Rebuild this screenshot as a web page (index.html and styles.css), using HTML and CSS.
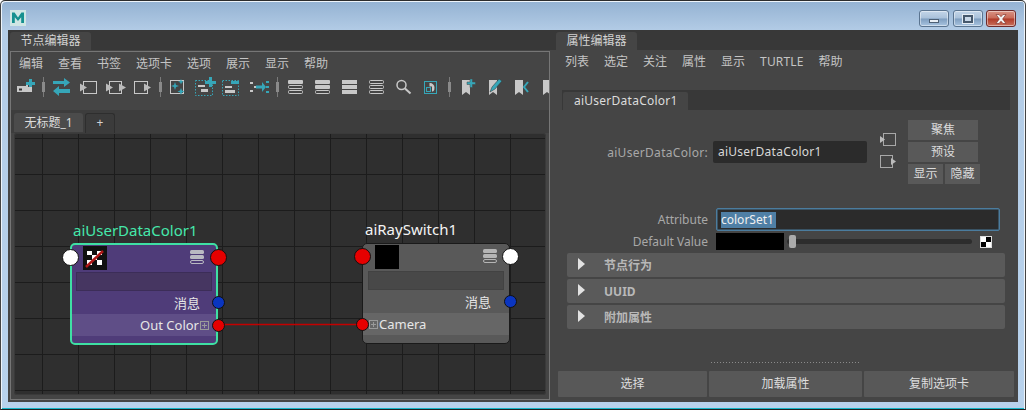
FILE: index.html
```html
<!DOCTYPE html>
<html lang="zh">
<head>
<meta charset="utf-8">
<title>节点编辑器</title>
<link rel="stylesheet" href="styles.css">
</head>
<body>
<div class="window">
  <header class="titlebar">
    <svg class="logo" width="16" height="16" viewBox="0 0 16 16"><rect width="16" height="16" fill="#cfe6e4"/><path d="M2 13V2.500h2.600L8 7.400 11.400 2.500H14V13h-2.800V7.300L8 11 4.800 7.300V13z" fill="#15908f"/></svg>
    <div class="winbtns">
      <div class="winbtn"><span class="glyph-min"></span></div>
      <div class="winbtn"><span class="glyph-max"></span></div>
      <div class="winbtn close"><svg width="14" height="10" viewBox="0 0 14 10"><path d="M2 0.500h3l2 2.200 2-2.200h3L8.600 5 12 9.500H9L7 7.200 5 9.500H2L5.400 5z" fill="#f2f2f2" stroke="#7a2a22" stroke-width=".6"/></svg></div>
    </div>
  </header>
  <div class="client">
    <section class="left-pane">
      <div class="pane-head"><div class="pane-tab">节点编辑器</div></div>
      <div class="frame">
        <nav class="menu"><span>编辑</span><span>查看</span><span>书签</span><span>选项卡</span><span>选项</span><span>展示</span><span>显示</span><span>帮助</span></nav>
        <div class="toolbar">
          <svg class="tool" viewBox="0 0 27 24"><path d="M6 11h9v-1h2v2h4v5H6z" fill="#c8c8c8"/><rect x="8" y="13.500" width="3" height="2" fill="#333"/><path d="M15 7h3V4h3v3h3v3h-3v2h-3v-2h-3z" fill="#36a6b8"/></svg>
          <i class="sep"></i>
          <svg class="tool" viewBox="0 0 27 24"><path d="M5 6h11V3l6 4.500-6 4.500V9H5zM22 14H11v-3l-6 5 6 5v-3h11z" fill="#36a6b8"/></svg>
          <svg class="tool" viewBox="0 0 27 24"><rect x="8.500" y="6.500" width="13" height="12" fill="none" stroke="#c8c8c8"/><path d="M5 8.500l7 4-7 4z" fill="#bbb"/></svg>
          <svg class="tool" viewBox="0 0 27 24"><rect x="7.500" y="6.500" width="12" height="12" fill="none" stroke="#c8c8c8"/><path d="M4 8.500l7 4-7 4zM17 8.500l7 4-7 4z" fill="#bbb"/></svg>
          <svg class="tool" viewBox="0 0 27 24"><rect x="5.500" y="6.500" width="13" height="12" fill="none" stroke="#c8c8c8"/><path d="M15 8.500l7 4-7 4z" fill="#bbb"/></svg>
          <i class="sep narrow"></i>
          <svg class="tool" viewBox="0 0 27 24"><rect x="6.500" y="5.500" width="13" height="13" fill="none" stroke="#c8c8c8"/><path d="M11 7l1 3 3 1-3 1-1 3-1-3-3-1 3-1zM17 4l.8 2 2.200.800-2.200.8-.8 2-.8-2-2.200-.8 2.200-.8zM17 13l1 2.500 2.500 1-2.500 1-1 2.500-1-2.500-2.500-1 2.500-1z" fill="#36a6b8"/></svg>
          <svg class="tool" viewBox="0 0 27 24"><rect x="4.500" y="5.500" width="17" height="15" fill="none" stroke="#36a6b8" stroke-dasharray="1.500 1.500"/><rect x="7" y="10" width="7" height="2" fill="#c8c8c8"/><rect x="10" y="14" width="7" height="3" fill="#c8c8c8"/><path d="M14 6h4V2h3v4h4v3h-4v3h-3V9h-4z" fill="#36a6b8"/></svg>
          <svg class="tool" viewBox="0 0 27 24"><rect x="4.500" y="5.500" width="16" height="15" fill="none" stroke="#36a6b8" stroke-dasharray="1.500 1.500"/><rect x="7" y="11" width="7" height="2" fill="#c8c8c8"/><rect x="7" y="15" width="10" height="3" fill="#c8c8c8"/><rect x="13" y="6" width="8" height="3" fill="#36a6b8"/></svg>
          <svg class="tool" viewBox="0 0 27 24"><path d="M5 7h3v2H5zM5 15h3v2H5zM9 11h3v2H9z" fill="#c8c8c8"/><path d="M11 10.500h6V7l4 5-4 5v-3.500h-6z" fill="#36a6b8"/><path d="M21 6h3v2h-3zM21 11h3v2h-3zM21 16h3v2h-3z" fill="#36a6b8"/></svg>
          <i class="sep"></i>
          <svg class="tool" viewBox="0 0 27 24"><rect x="6" y="5" width="15" height="4" rx="1" fill="#c8c8c8"/><rect x="6.500" y="10.500" width="14" height="3" rx="1" fill="none" stroke="#c8c8c8"/><rect x="6.500" y="15.500" width="14" height="3" rx="1" fill="none" stroke="#c8c8c8"/></svg>
          <svg class="tool" viewBox="0 0 27 24"><rect x="6" y="5" width="15" height="4" rx="1" fill="#c8c8c8"/><rect x="6" y="10" width="15" height="4" rx="1" fill="#c8c8c8"/><rect x="6.500" y="15.500" width="14" height="3" rx="1" fill="none" stroke="#c8c8c8"/></svg>
          <svg class="tool" viewBox="0 0 27 24"><rect x="6" y="5" width="15" height="4" fill="#c8c8c8"/><rect x="6" y="10" width="15" height="4" fill="#c8c8c8"/><rect x="6" y="15" width="15" height="4" fill="#c8c8c8"/></svg>
          <svg class="tool" viewBox="0 0 27 24"><rect x="6.500" y="5.500" width="14" height="3" rx="1" fill="none" stroke="#c8c8c8"/><rect x="6.500" y="10.500" width="14" height="3" rx="1" fill="none" stroke="#c8c8c8"/><rect x="6.500" y="15.500" width="14" height="3" rx="1" fill="none" stroke="#c8c8c8"/></svg>
          <svg class="tool" viewBox="0 0 27 24"><circle cx="11.500" cy="10" r="4.500" fill="none" stroke="#c8c8c8" stroke-width="1.500"/><path d="M15 13.500l5.500 5" stroke="#c8c8c8" stroke-width="2"/></svg>
          <svg class="tool" viewBox="0 0 27 24"><rect x="7.500" y="6.500" width="12" height="12" fill="none" stroke="#36a6b8"/><rect x="9.500" y="12.500" width="4" height="4" fill="none" stroke="#36a6b8"/><path d="M12.500 8a4.500 4.500 0 0 1 5 4.500 4.500 4.500 0 0 1-1.500 4h-1v-5h-2.500z" fill="#c8c8c8"/></svg>
          <i class="sep"></i>
          <svg class="tool" viewBox="0 0 27 24"><path d="M8 5h8v15l-4-3-4 3z" fill="#c8c8c8"/><path d="M13 7h3V4h2.500v3H21.500v2.500h-3v3H16v-3h-3z" fill="#36a6b8" stroke="#444" stroke-width=".5"/></svg>
          <svg class="tool" viewBox="0 0 27 24"><path d="M8 5h8v15l-4-3-4 3z" fill="#c8c8c8"/><path d="M9 17l2-5 7-8 3 2-7 8z" fill="#36a6b8" stroke="#333" stroke-width=".5"/></svg>
          <svg class="tool" viewBox="0 0 27 24"><path d="M7 5h8v15l-4-3-4 3z" fill="#c8c8c8"/><path d="M20 7l-4 5 4 5" fill="none" stroke="#36a6b8" stroke-width="2"/></svg>
          <svg class="tool" viewBox="0 0 27 24"><path d="M8 5h8v15l-4-3-4 3z" fill="#c8c8c8"/></svg>
        </div>
        <div class="tabstrip"><div class="doc-tab">无标题_1</div><div class="add-tab">+</div></div>
        <div class="graph">
          <svg class="wire" width="532" height="262"><line x1="204" y1="191.500" x2="348" y2="191.500" stroke="#c40000" stroke-width="1.500"/></svg>

          <div class="node-title green t1">aiUserDataColor1</div>
          <div class="node-title t2">aiRaySwitch1</div>

          <div class="node purple n1">
            <div class="node-top">
              <svg class="swatch" viewBox="0 0 24 24"><rect width="24" height="24" fill="#111"/><path d="M4 5h5v4H4zM9 9h5v5H9zM4 14h5v5H4zM14 14h5v5h-5zM14 5h5v4h-5z" fill="#fff"/><path d="M3 21L20 5" stroke="#b01818" stroke-width="2.500"/></svg>
              <svg class="stack" viewBox="0 0 14 14"><rect y="0" width="14" height="4" rx="1.500" fill="#b9b9c2"/><rect y="5" width="14" height="4" rx="1.500" fill="#b9b9c2"/><rect x=".5" y="10.500" width="13" height="3" rx="1.500" fill="none" stroke="#b9b9c2"/></svg>
            </div>
            <div class="node-field"></div>
            <div class="node-row right">消息</div>
            <div class="node-row band right">Out Color<i class="plus"></i></div>
          </div>

          <div class="node grey n2">
            <div class="node-top">
              <div class="swatch black"></div>
              <svg class="stack" viewBox="0 0 14 14"><rect y="0" width="14" height="4" rx="1.500" fill="#b5b5b5"/><rect y="5" width="14" height="4" rx="1.500" fill="#b5b5b5"/><rect x=".5" y="10.500" width="13" height="3" rx="1.500" fill="none" stroke="#b5b5b5"/></svg>
            </div>
            <div class="node-field"></div>
            <div class="node-row right">消息</div>
            <div class="node-row band"><i class="plus"></i>Camera</div>
          </div>

          <i class="port big white p1"></i>
          <i class="port big red p2"></i>
          <i class="port small blue p3"></i>
          <i class="port small red p4"></i>
          <i class="port big red p5"></i>
          <i class="port big white p6"></i>
          <i class="port small blue p7"></i>
          <i class="port small red p8"></i>
        </div>
      </div>
    </section>

    <section class="right-pane">
      <div class="pane-head"><div class="pane-tab r">属性编辑器</div></div>
      <nav class="menu rmenu"><span>列表</span><span>选定</span><span>关注</span><span>属性</span><span>显示</span><span class="wide">TURTLE</span><span>帮助</span></nav>
      <div class="subtabs"><div class="subtab">aiUserDataColor1</div></div>
      <div class="name-row">
        <label class="lbl spaced">aiUserDataColor:</label>
        <div class="name-input">aiUserDataColor1</div>
        <div class="io-icons">
          <svg width="16" height="14" viewBox="0 0 16 14"><rect x="3.500" y=".5" width="12" height="12" fill="none" stroke="#a8a8a8"/><path d="M0 3l5 3.500L0 10z" fill="#bbb"/></svg>
          <svg width="16" height="14" viewBox="0 0 16 14"><rect x=".5" y=".5" width="12" height="12" fill="none" stroke="#a8a8a8"/><path d="M11 3l5 3.500-5 3.500z" fill="#bbb"/></svg>
        </div>
        <div class="side-btns">
          <div class="btn">聚焦</div>
          <div class="btn">预设</div>
          <div class="btn-pair"><div class="btn">显示</div><div class="btn">隐藏</div></div>
        </div>
      </div>
      <div class="attr-row first">
        <label class="lbl">Attribute</label>
        <div class="attr-input"><span class="sel">colorSet1</span></div>
      </div>
      <div class="attr-row second">
        <label class="lbl">Default Value</label>
        <div class="color-box"></div>
        <div class="slider"><i class="thumb"></i></div>
        <div class="checker"></div>
      </div>
      <div class="sections">
        <div class="section"><i class="tri"></i>节点行为</div>
        <div class="section"><i class="tri"></i>UUID</div>
        <div class="section"><i class="tri"></i>附加属性</div>
      </div>
      <div class="dots"></div>
      <div class="bottom-btns">
        <div class="bbtn b1">选择</div>
        <div class="bbtn b2">加载属性</div>
        <div class="bbtn b3">复制选项卡</div>
      </div>
    </section>
  </div>
</div>
</body>
</html>
```

FILE: styles.css
```css
* { box-sizing: border-box; }
html, body { margin: 0; padding: 0; }
body {
  width: 1026px;
  height: 410px;
  overflow: hidden;
  background: #fff;
  font-family: "Noto Sans", "Noto Sans CJK SC", sans-serif;
  font-size: 12px;
  color: #d2d2d2;
}
.window {
  width: 1026px;
  height: 410px;
  display: flex;
  flex-direction: column;
  background: linear-gradient(#94b2d2 0, #b3cce6 30px, #b8d2ec 100%);
  border-radius: 5px 5px 0 0;
  border-top: 1px solid #2c2c2c;
  border-left: 1px solid #444;
  border-right: 1px solid #444;
  border-bottom: 1px solid #222;
  box-shadow: inset 1px 1px 0 #eef4fa, inset -1px 0 0 #eef4fa, inset 0 -1px 0 #15b5c8;
}
.titlebar {
  height: 29px;
  flex: none;
  display: flex;
  align-items: flex-start;
  justify-content: space-between;
  padding: 9px 9px 0 9px;
}
.logo { display: block; }
.winbtns { display: flex; gap: 3px; }
.winbtn {
  width: 30px;
  height: 17px;
  display: flex;
  align-items: center;
  justify-content: center;
  border: 1px solid #5a7490;
  border-radius: 3px;
  background: linear-gradient(#c3d5e8 0, #a9c1da 48%, #7e9dbf 52%, #a8c4e0 100%);
  box-shadow: inset 0 0 0 1px rgba(255,255,255,.45);
}
.winbtn:nth-child(2) { margin-left: 1px; }
.winbtn.close {
  border-color: #6e2a2a;
  background: linear-gradient(#d99384 0, #c86a58 48%, #b03a28 52%, #c9705c 100%);
}
.glyph-min { width: 10px; height: 4px; background: #e8eef4; border: 1px solid #4c5f74; margin-top: 4px; }
.glyph-max { width: 10px; height: 8px; border: 2px solid #46586c; outline: 1px solid #e3ebf3; background: #c9d8e8; }

.client {
  flex: none;
  height: 372px;
  margin: 0 7px;
  display: flex;
  background: #454545;
}
.pane-head { height: 20px; background: #383838; padding-top: 2px; flex: none; }
.pane-tab {
  height: 18px;
  width: 81px;
  margin-left: 2px;
  background: #454545;
  border-radius: 3px 3px 0 0;
  text-align: center;
  line-height: 18px;
}
.pane-tab.r { width: 81px; margin-left: 3px; }

.left-pane { width: 545px; flex: none; display: flex; flex-direction: column; }
.frame {
  width: 540px;
  height: 349px;
  margin: 1px 0 0 2px;
  border: 1px solid #767676;
  display: flex;
  flex-direction: column;
  overflow: hidden;
}
.menu {
  height: 24px;
  flex: none;
  display: flex;
  align-items: center;
  gap: 15px;
  padding-left: 8px;
  color: #c4c4c4;
  margin-top: -1px;
}
.toolbar {
  height: 35px;
  flex: none;
  display: flex;
  align-items: flex-start;
  width: 538px;
  overflow: hidden;
}
.tool { width: 27px; height: 24px; flex: none; display: block; }
.sep {
  flex: none;
  width: 10px;
  height: 20px;
  margin-top: 2px;
  background:
    linear-gradient(#8a8a8a, #8a8a8a) center / 3px 10px no-repeat,
    linear-gradient(#7a7a7a, #7a7a7a) center / 1px 100% no-repeat;
}
.sep.narrow { width: 8px; }

.tabstrip {
  height: 23px;
  flex: none;
  background: #3d3d3d;
  display: flex;
  gap: 2px;
  padding: 3px 0 0 3px;
}
.doc-tab {
  width: 69px;
  height: 19px;
  background: #4b4b4b;
  border-radius: 3px 3px 0 0;
  text-align: center;
  line-height: 19px;
  font-size: 12px;
  color: #dcdcdc;
}
.add-tab {
  width: 30px;
  height: 20px;
  background: #3b3b3b;
  border: 1px solid #2e2e2e;
  border-bottom: 0;
  border-radius: 3px 3px 0 0;
  text-align: center;
  line-height: 18px;
  font-size: 12px;
}
.graph {
  position: relative;
  width: 532px;
  height: 262px;
  margin: 0 0 0 3px;
  flex: none;
  border-radius: 3px;
  box-shadow: inset 0 0 0 1px #3a3a3a;
  background-color: #2f2f2f;
  background-image:
    linear-gradient(90deg, #1c1c1c 1px, transparent 1px),
    linear-gradient(#1c1c1c 1px, transparent 1px);
  background-size: 36px 36px;
  background-position: 28px 5px;
}
.wire { position: absolute; left: 0; top: 0; }
.node-title { position: absolute; font-size: 15px; line-height: 18px; color: #f4f4f4; }
.node-title.green { color: #45e8ab; }
.t1 { left: 59px; top: 88px; }
.t2 { left: 351px; top: 87px; }
.node {
  position: absolute;
  width: 148px;
  height: 102px;
  border-radius: 5px;
  border: 2px solid #111;
  display: flex;
  flex-direction: column;
  overflow: hidden;
}
.n1 { left: 56px; top: 110px; }
.n2 { left: 348px; top: 110px; height: 101px; border-width: 1px; border-color: #1a1a1a; }
.purple { background: #4f3c79; border-color: #3fe0a4; }
.grey { background: #595959; }
.node-top {
  height: 27px;
  flex: none;
  display: flex;
  justify-content: space-between;
  align-items: flex-start;
  padding: 1px 12px 0 11px;
}
.n2 .node-top { padding: 1px 12px 0 12px; height: 27px; }
.swatch { width: 24px; height: 24px; display: block; flex: none; }
.swatch.black { background: #000; }
.stack { width: 14px; height: 14px; margin-top: 4px; display: block; }
.node-field { height: 19px; margin: 0 4px; flex: none; background: #463661; border: 1px solid #3c2d58; }
.n2 .node-field { margin: 0 5px; background: #484848; border-color: #424242; }
.node-row {
  height: 22px;
  flex: none;
  display: flex;
  align-items: center;
  font-size: 13px;
  color: #e6e6e6;
}
.node-row.right { justify-content: flex-end; padding-right: 16px; }
.n1 .node-row:nth-child(3) { height: 23px; }
.node-row.band { background: #5f4e87; }
.n1 .node-row.band { padding-right: 6px; }
.n2 .node-row.band { background: #666; padding-left: 5px; }
.n2 .node-row:nth-child(3) { height: 23px; padding-right: 18px; }
.plus {
  width: 9px;
  height: 9px;
  margin: 1px 1px 0 1px;
  flex: none;
  border: 1px solid #9a9a9a;
  background:
    linear-gradient(#9a9a9a, #9a9a9a) center / 5px 1px no-repeat,
    linear-gradient(#9a9a9a, #9a9a9a) center / 1px 5px no-repeat;
}
.port { position: absolute; border-radius: 50%; border: 1.500px solid #111; display: block; }
.port.big { width: 17px; height: 17px; }
.port.small { width: 13px; height: 13px; }
.white { background: #fff; }
.red { background: #e60000; }
.blue { background: #0a35c0; }
.p1 { left: 48px; top: 116px; }
.p2 { left: 196px; top: 116px; }
.p3 { left: 198px; top: 163px; }
.p4 { left: 198px; top: 186px; }
.p5 { left: 340px; top: 115px; }
.p6 { left: 488px; top: 115px; }
.p7 { left: 490px; top: 162px; }
.p8 { left: 342px; top: 185px; }

.right-pane { flex: 1; min-width: 0; display: flex; flex-direction: column; }
.rmenu { padding-left: 12px; }
.wide { letter-spacing: .15px; }
.subtabs {
  height: 20px;
  flex: none;
  margin: 17px 8px 0 9px;
  padding: 2px 0 0 1px;
  background: #383838;
}
.subtab {
  width: 125px;
  height: 18px;
  background: #454545;
  border-radius: 2px 2px 0 0;
  padding-left: 11px;
  line-height: 18px;
  font-size: 12px;
  letter-spacing: .25px;
  color: #dcdcdc;
}
.name-row {
  display: flex;
  align-items: flex-start;
  margin-top: 10px;
  height: 64px;
  flex: none;
}
.lbl { width: 155px; flex: none; text-align: right; color: #a8a8a8; font-size: 12px; }
.lbl.spaced { letter-spacing: .3px; }
.name-row .lbl { margin-top: 22px; line-height: 22px; }
.name-input {
  width: 154px;
  height: 22px;
  margin: 21px 0 0 5px;
  background: #2b2b2b;
  border-radius: 2px;
  padding-left: 5px;
  line-height: 22px;
  letter-spacing: .25px;
  color: #d8d8d8;
}
.io-icons {
  width: 16px;
  margin: 13px 0 0 13px;
  display: flex;
  flex-direction: column;
  gap: 8px;
}
.io-icons svg { display: block; }
.side-btns { margin-left: 12px; display: flex; flex-direction: column; gap: 2px; width: 72px; }
.btn {
  width: 70px;
  height: 20px;
  background: #595959;
  text-align: center;
  line-height: 20px;
  color: #dcdcdc;
}
.btn-pair { display: flex; gap: 2px; }
.btn-pair .btn { width: 35px; }
.attr-row { display: flex; align-items: center; flex: none; }
.attr-row.first { margin-top: 24px; height: 23px; }
.attr-row.second { margin-top: 2px; height: 17px; }
.attr-input {
  width: 284px;
  height: 23px;
  margin-left: 8px;
  background: #2b2b2b;
  border: 1px solid #4b7c9e;
  box-shadow: inset 0 0 0 .5px #4b7c9e;
  border-radius: 2px;
  padding: 3px 0 0 4px;
}
.sel {
  display: block;
  width: 55px;
  height: 16px;
  background: #4f7fa5;
  color: #f0f0f0;
  line-height: 16px;
  white-space: nowrap;
}
.color-box { width: 68px; height: 17px; margin-left: 8px; background: #000; }
.slider {
  position: relative;
  width: 185px;
  height: 5px;
  margin-left: 3px;
  background: #2d2d2d;
  border-radius: 3px;
}
.thumb {
  position: absolute;
  left: 2px;
  top: -4px;
  width: 7px;
  height: 13px;
  border-radius: 2px;
  background: #ababab;
}
.checker {
  width: 12px;
  height: 12px;
  margin-left: 8px;
  border: 1px solid #ddd;
  background: conic-gradient(#000 25%, #fff 0 50%, #000 0 75%, #fff 0);
}
.sections { margin: 3px 0 0 14px; width: 438px; display: flex; flex-direction: column; gap: 2px; flex: none; }
.section {
  height: 24px;
  background: #5a5a5a;
  border-radius: 2px;
  display: flex;
  align-items: center;
  font-weight: 700;
  color: #b8b8b8;
}
.tri {
  width: 0;
  height: 0;
  margin: -3px 19px 0 11px;
  border-left: 7px solid #e2e2e2;
  border-top: 6px solid transparent;
  border-bottom: 6px solid transparent;
}
.dots {
  width: 148px;
  height: 1px;
  margin: 33px 0 0 158px;
  flex: none;
  background: repeating-linear-gradient(90deg, #8a8a8a 0 1px, transparent 1px 3px);
}
.bottom-btns { display: flex; gap: 2px; margin: 8px 0 0 5px; flex: none; }
.bbtn {
  height: 26px;
  background: #585858;
  border-radius: 1px;
  text-align: center;
  line-height: 26px;
  color: #dedede;
}
.b1 { width: 149px; }
.b2 { width: 153px; }
.b3 { width: 150px; }
```
